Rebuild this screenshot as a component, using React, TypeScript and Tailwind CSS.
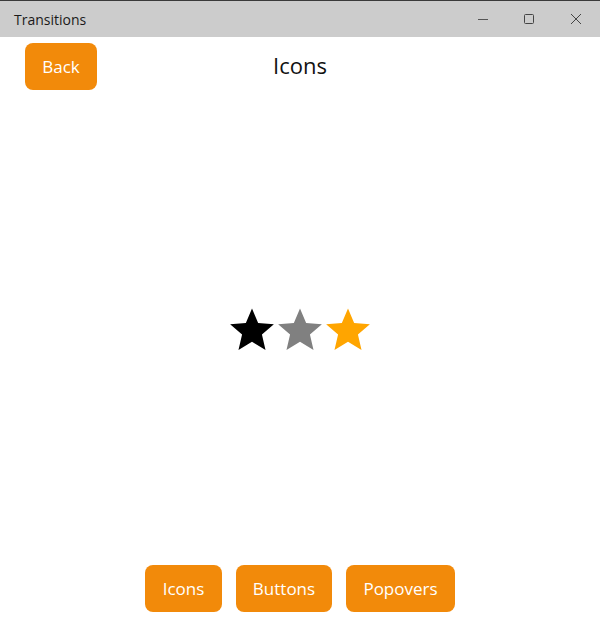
import React from "react";

const StarIcon = ({ color }: { color: string }) => (
  <svg width="44" height="42" viewBox="2 1.8 20 19.2" className="block">
    <path
      d="M12 17.27L18.18 21l-1.64-7.03L22 9.24l-7.19-.61L12 2 9.19 8.63 2 9.24l5.46 4.73L5.82 21z"
      fill={color}
    />
  </svg>
);

export default function App() {
  return (
    <div
      className="h-[619px] w-[600px] flex flex-col bg-white overflow-hidden"
      style={{ fontFamily: '"Open Sans", "Noto Sans", sans-serif' }}
    >
      {/* Title bar */}
      <div className="h-[37px] shrink-0 bg-[#cccccc] border-t border-[#3a3a3a] flex items-center">
        <span className="pl-[14px] text-[14px] text-[#1a1a1a] flex-1">Transitions</span>
        <div className="flex h-full">
          <div className="w-[46px] flex items-center justify-center">
            <svg width="12" height="12" viewBox="0 0 12 12">
              <path d="M1 6.5H11" stroke="#555" strokeWidth="1" />
            </svg>
          </div>
          <div className="w-[46px] flex items-center justify-center">
            <svg width="12" height="12" viewBox="0 0 12 12">
              <rect x="1.5" y="1.5" width="9" height="9" rx="1" fill="none" stroke="#444" strokeWidth="1" />
            </svg>
          </div>
          <div className="w-[48px] flex items-center justify-center">
            <svg width="12" height="12" viewBox="0 0 12 12">
              <path d="M1 1L11 11M11 1L1 11" stroke="#444" strokeWidth="1" />
            </svg>
          </div>
        </div>
      </div>

      {/* Header */}
      <div className="grid grid-cols-3 items-center pt-[6px] px-[25px]">
        <div>
          <button className="w-[72px] h-[47px] rounded-[8px] bg-[#f28a0a] text-white text-[17px]">
            Back
          </button>
        </div>
        <div className="justify-self-center text-[22px] text-[#111] pb-[2px]">Icons</div>
        <div />
      </div>

      {/* Middle */}
      <div className="flex-1 flex items-center justify-center gap-[4px] pt-[2px]">
        <StarIcon color="#000000" />
        <StarIcon color="#808080" />
        <StarIcon color="#ffa500" />
      </div>

      {/* Bottom */}
      <div className="flex justify-center gap-[14px] pb-[7px]">
        <button className="w-[77px] h-[47px] rounded-[8px] bg-[#f28a0a] text-white text-[17px]">Icons</button>
        <button className="w-[96px] h-[47px] rounded-[8px] bg-[#f28a0a] text-white text-[17px]">Buttons</button>
        <button className="w-[109px] h-[47px] rounded-[8px] bg-[#f28a0a] text-white text-[17px]">Popovers</button>
      </div>
    </div>
  );
}
